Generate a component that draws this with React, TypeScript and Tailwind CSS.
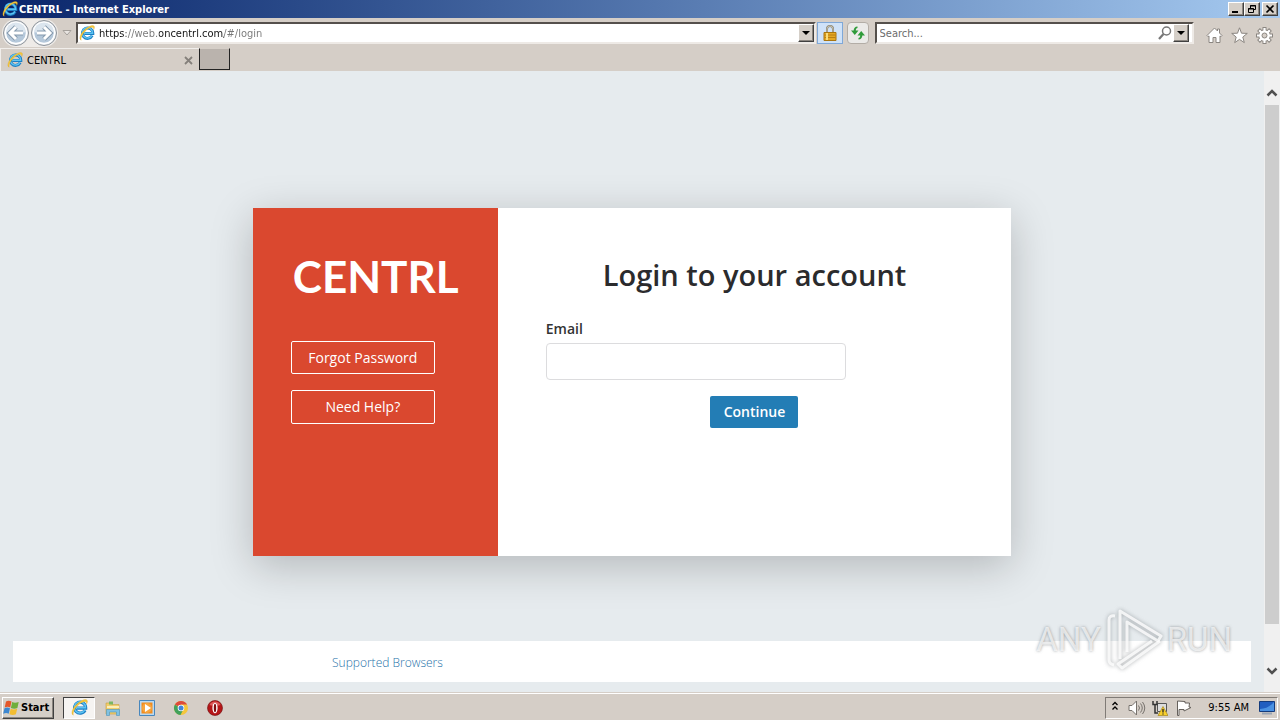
import { useState } from 'react';
import type { ReactNode } from 'react';

const RAISED =
  'border border-t-white border-l-white border-r-[#404040] border-b-[#404040] bg-[#d5cfc8] shadow-[inset_-1px_-1px_0_#8b8680]';

function IeIcon({ className }: { className: string }) {
  return (
    <svg viewBox="0 0 16 16" className={className} aria-hidden="true">
      <path
        d="M13.2 10.6a5.2 5.2 0 1 1 .6-2.6v.6H5.4"
        fill="none"
        stroke="#1c7fc4"
        strokeWidth="3"
      />
      <path
        d="M13 10.3a5.2 5.2 0 1 1 .6-2.3v.3H5.4"
        fill="none"
        stroke="#5cc3f2"
        strokeWidth="1.4"
      />
      <path
        d="M2.2 15.2C-.6 13.9 1.4 8.600 5.400 4.900 9.200 1.400 14 -.6 15.200 1.300c.5.8.2 2-.5 3.200.1-1.300-.3-2.100-1.300-2.200-2.100-.2-5.400 1.900-7.800 4.600-2.800 3-4.100 6.300-3.400 8.300z"
        fill="#f5c93b"
        stroke="#d99f1c"
        strokeWidth=".3"
      />
    </svg>
  );
}

function NavButton({ label, back }: { label: string; back?: boolean }) {
  return (
    <button type="button" aria-label={label} className="size-7">
      <svg viewBox="0 0 28 28" className="size-7">
        <circle cx="14" cy="14" r="12.500" fill="#e9edf1" stroke="#8d939a" />
        <circle cx="14" cy="14" r="10.500" fill="#b5c8da" stroke="#fff" strokeWidth="1.500" />
        <path d="M4 13a10 9.500 0 0 1 20 0q-10 3-20 0z" fill="#dbe5ee" />
        <path
          d={back ? 'M21 14H8m6-6-6 6 6 6' : 'M7 14h13m-6-6 6 6-6 6'}
          fill="none"
          stroke="#8499ad"
          strokeWidth="5"
        />
        <path
          d={back ? 'M21 14H8m6-6-6 6 6 6' : 'M7 14h13m-6-6 6 6-6 6'}
          fill="none"
          stroke="#fff"
          strokeWidth="3"
        />
      </svg>
    </button>
  );
}

function DropButton({ label }: { label: string }) {
  return (
    <button
      type="button"
      aria-label={label}
      className={`flex h-[18px] w-4 shrink-0 items-center justify-center ${RAISED}`}
    >
      <svg viewBox="0 0 8 4" className="h-1 w-2">
        <path d="M0 0h8L4 4z" fill="#000" />
      </svg>
    </button>
  );
}

function WindowButton({ label, children }: { label: string; children: ReactNode }) {
  return (
    <button type="button" aria-label={label} className={`flex h-3.5 w-4 items-center justify-center ${RAISED}`}>
      <svg viewBox="0 0 12 10" className="h-2.5 w-3" fill="none" stroke="#000">
        {children}
      </svg>
    </button>
  );
}

function TitleBar() {
  return (
    <header className="flex h-[18px] items-center bg-linear-to-r from-[#0a246a] to-[#a6caf0] pr-0.5 pl-0.5">
      <IeIcon className="size-4" />
      <h1 className="flex-1 pt-px pl-px text-[11px] leading-4 font-bold text-white">CENTRL - Internet Explorer</h1>
      <div className="flex">
        <WindowButton label="Minimize">
          <path d="M2 8h6" strokeWidth="2" />
        </WindowButton>
        <WindowButton label="Restore">
          <path d="M4.500 4V1.500h5v4H8M4 2h6" />
          <path d="M2.500 4.500h5v4h-5zM2 5h6" />
        </WindowButton>
        <span className="w-0.5" />
        <WindowButton label="Close">
          <path d="m2.500 1.500 7 7m0-7-7 7" strokeWidth="1.700" />
        </WindowButton>
      </div>
    </header>
  );
}

function Toolbar() {
  return (
    <div className="flex h-[30px] items-center pl-0.5">
      <div className="flex rounded-full bg-[#eeebe8]">
        <NavButton label="Back" back />
        <NavButton label="Forward" />
      </div>
      <button type="button" aria-label="Recent pages" className="flex w-[18px] justify-center">
        <svg viewBox="0 0 10 6" className="h-1.5 w-2.5">
          <path d="M1 .5h8l-4 4.500z" fill="#e9e5e1" stroke="#a5a09b" />
        </svg>
      </button>

      <div className="flex h-[22px] flex-1 items-center border-2 border-t-[#55504c] border-r-[#eeeae6] border-b-[#eeeae6] border-l-[#55504c] bg-white pl-px">
        <IeIcon className="size-4" />
        <input
          aria-label="Address"
          defaultValue="https://web.oncentrl.com/#/login"
          className="ml-1 min-w-0 flex-1 bg-[linear-gradient(90deg,#111_0_27px,#777_27px_60px,#111_60px_125px,#777_125px)] bg-clip-text pt-0.5 text-[11px] leading-4 text-transparent caret-black outline-none"
        />
        <DropButton label="Show address list" />
      </div>
      <button
        type="button"
        aria-label="Security report"
        className="ml-px flex h-[22px] w-[26px] items-center justify-center border border-[#7fa8d8] bg-[#cfe2f8]"
      >
        <svg viewBox="0 0 14 16" className="h-4 w-3.5">
          <path d="M4 8V4a3 3 0 0 1 6 0v4" fill="none" stroke="#8a8370" strokeWidth="2" />
          <path d="M4 8V4a3 3 0 0 1 6 0v4" fill="none" stroke="#d9d5c4" strokeWidth=".7" />
          <path d="M1 7.500h12v8H1z" fill="#e5a823" stroke="#a9750f" />
          <path d="M1.500 10h11M1.500 12.500h11" stroke="#b97f12" />
          <path d="M4 8v7" stroke="#f9dc79" strokeWidth="2" />
        </svg>
      </button>
      <button
        type="button"
        aria-label="Refresh"
        className="ml-1 flex h-[22px] w-[22px] items-center justify-center rounded-sm border border-[#b3ada6] bg-[#ebeae8]"
      >
        <svg viewBox="0 0 16 16" className="size-4" fill="#2f9b3a">
          <path d="M7.500 1.500C5 1.500 3.700 3.200 3.700 5.500H1L4.800 10l3.700-4.500H5.800c0-1.400.5-2.200 1.700-2.400z" />
          <path d="M8.500 14.500c2.500 0 3.800-1.700 3.800-4H15L11.200 6l-3.700 4.500h2.700c0 1.400-.5 2.200-1.700 2.400z" />
        </svg>
      </button>

      <div className="ml-1.5 flex h-[22px] w-1/4 items-center border-2 border-t-[#55504c] border-r-[#eeeae6] border-b-[#eeeae6] border-l-[#55504c] bg-white pr-[3px] pl-[3px]">
        <input
          aria-label="Search"
          placeholder="Search..."
          className="min-w-0 flex-1 pt-0.5 text-[11px] leading-4 outline-none placeholder:text-[#6c6c6c]"
        />
        <button type="button" aria-label="Go" className="mr-px">
          <svg viewBox="0 0 14 14" className="size-3.5" fill="none" stroke="#777">
            <circle cx="8.500" cy="5" r="4" strokeWidth="1.500" />
            <path d="m5.500 8-4.500 5" strokeWidth="2.200" />
          </svg>
        </button>
        <DropButton label="Search providers" />
      </div>

      <div className="mr-[7px] ml-3 flex gap-2 pt-1">
        <button type="button" aria-label="Home">
          <svg viewBox="0 0 17 17" className="size-[17px]" fill="#fff" stroke="#8b8681">
            <path d="M8.500 1 1 8.500l1 1.200 1-.8V15.500h4V10.500h3v5h4V8.900l1 .8 1-1.200-2.500-2.500V2h-2v2z" />
          </svg>
        </button>
        <button type="button" aria-label="Favorites">
          <svg viewBox="0 0 17 17" className="size-[17px]" fill="#fff" stroke="#8b8681">
            <path d="m8.500.8 2 5.400 5.800.2-4.500 3.600 1.500 5.600-4.800-3.200-4.800 3.200 1.500-5.600L.7 6.400l5.800-.2z" />
          </svg>
        </button>
        <button type="button" aria-label="Tools">
          <svg viewBox="0 0 17 17" className="size-[17px]">
            <g stroke="#8b8681" strokeWidth="4">
              <path d="M8.500 0v17M0 8.500h17M2.500 2.500l12 12m0-12-12 12" />
            </g>
            <circle cx="8.500" cy="8.500" r="6.200" fill="#8b8681" />
            <g stroke="#fff" strokeWidth="2.200">
              <path d="M8.500 1v15M1 8.500h15M3.200 3.200l10.600 10.600m0-10.600L3.200 13.800" />
            </g>
            <circle cx="8.500" cy="8.500" r="5.300" fill="#fff" />
            <circle cx="8.500" cy="8.500" r="2.500" fill="#d5cec7" stroke="#8b8681" />
          </svg>
        </button>
      </div>
    </div>
  );
}

function TabStrip() {
  return (
    <div className="flex h-[23px] items-stretch">
      <div className="flex w-[199px] items-center border-t border-l border-[#f1eeeb] pr-1.5 pl-1.5">
        <IeIcon className="size-4" />
        <span className="flex-1 pt-0.5 pl-1 text-[11px] leading-4 text-black">CENTRL</span>
        <button type="button" aria-label="Close tab">
          <svg viewBox="0 0 9 9" className="size-[9px]" stroke="#85807b" strokeWidth="1.800">
            <path d="m1 1 7 7m0-7-7 7" />
          </svg>
        </button>
      </div>
      <button
        type="button"
        aria-label="New tab"
        className="mb-px w-[31px] border border-t-[#d5cec7] border-r-[#222] border-b-[#222] border-l-[#222] bg-[#bab3ad]"
      />
    </div>
  );
}

function LoginCard() {
  const [email, setEmail] = useState('');

  return (
    <div className="flex min-h-[348px] w-3/5 bg-white shadow-[0_10px_40px_rgba(0,0,0,0.22)]">
      <aside className="flex w-[245px] flex-col gap-4 bg-[#da482f] px-[38px]">
        <p className="mt-[42px] mb-[23px] pl-0.5 font-[Lato] text-[44px] leading-[52px] font-bold text-white">CENTRL</p>
        <button
          type="button"
          className="h-[33px] w-36 rounded-xs border border-white text-sm leading-5 text-white"
        >
          Forgot Password
        </button>
        <button
          type="button"
          className="h-[34px] w-36 rounded-xs border border-white text-sm leading-5 text-white"
        >
          Need Help?
        </button>
      </aside>

      <form
        className="flex flex-1 flex-col px-12 pt-11"
        onSubmit={(e) => {
          e.preventDefault();
        }}
      >
        <h2 className="text-center text-[29px] leading-[46px] font-semibold text-[#2b2b2d]">Login to your account</h2>
        <label htmlFor="email" className="mt-5 text-sm leading-[22px] font-semibold text-[#333]">
          Email
        </label>
        <input
          id="email"
          type="email"
          value={email}
          onChange={(e) => setEmail(e.target.value)}
          className="mt-[3px] h-[37px] w-[300px] rounded border border-[#dcdcde] px-3 text-sm outline-none"
        />
        <button
          type="submit"
          className="mt-4 h-8 w-[88px] self-center rounded-xs bg-[#237db5] text-sm leading-5 font-semibold text-white"
        >
          Continue
        </button>
      </form>
    </div>
  );
}

function Scrollbar() {
  return (
    <div className="flex w-4 flex-col items-center bg-[#f0f0f0] pt-4">
      <svg viewBox="0 0 12 12" className="size-3" fill="none" stroke="#505050" strokeWidth="2.500">
        <path d="m1.500 8.500 4.500-4.500 4.500 4.500" />
      </svg>
      <div className="mt-1.5 mb-[41px] w-3.5 flex-1 bg-[#cdcdcd]" />
      <svg viewBox="0 0 12 12" className="mb-[15px] size-3" fill="none" stroke="#505050" strokeWidth="2.500">
        <path d="M1.500 3.500 6 8l4.500-4.500" />
      </svg>
    </div>
  );
}

function Watermark() {
  return (
    <div className="pointer-events-none absolute right-12 bottom-5 flex items-center gap-1 font-[Roboto,sans-serif] text-[33px] leading-[64px] text-white/70 [text-shadow:0_0_3px_rgba(110,115,120,0.7)]">
      <span>ANY</span>
      <svg viewBox="0 0 58 64" className="h-16 w-[58px] drop-shadow-[0_0_2px_rgba(110,115,120,0.7)]" fill="none" strokeLinejoin="round">
        <path d="M10 8q-6-1-6 4v40q0 4 5 5" stroke="#fff" strokeOpacity=".8" strokeWidth="3" />
        <path d="M15 51V3l41 25-3 5L22 14v30" stroke="#fff" strokeOpacity=".8" strokeWidth="3" />
        <path d="M55 33 17 60l-4-4 34-23" stroke="#fff" strokeOpacity=".8" strokeWidth="3" />
      </svg>
      <span>RUN</span>
    </div>
  );
}

function Taskbar() {
  return (
    <footer className="flex h-7 items-center border-t border-[#d5cec7] bg-[#d5cec7] pr-0.5 pl-0.5 shadow-[inset_0_1px_0_#fff]">
      <button
        type="button"
        className={`mt-0.5 flex h-[22px] w-[52px] items-center gap-0.5 text-[11px] leading-4 font-bold text-black ${RAISED}`}
      >
        <svg viewBox="0 0 16 16" className="size-4">
          <path d="M3 1.500q2.500-1.500 5.500 0L7.200 7.500q-2.500-1.500-5.500 0z" fill="#e4572b" />
          <path d="M9.200 2q2.500 1.500 6.500 0l-1.300 6q-3 1.500-6.500 0z" fill="#6fae3c" />
          <path d="M1.500 8.300q2.500-1.500 5.500 0l-1.300 5.500q-2.500-1.500-5.500 0z" fill="#3d87d0" />
          <path d="M7.700 8.800q2.500 1.500 6.500 0l-1.300 5.500q-3 1.500-6.500 0z" fill="#f3bd31" />
        </svg>
        Start
      </button>
      <div className="mt-0.5 ml-[9px] flex items-center">
        <button
          type="button"
          aria-label="Internet Explorer"
          className="flex h-[22px] w-8 items-center justify-center border border-t-[#404040] border-r-white border-b-white border-l-[#404040] bg-[#f6f4f2]"
        >
          <IeIcon className="size-[17px]" />
        </button>
        <button type="button" aria-label="Explorer" className="ml-px px-[9px]">
          <svg viewBox="0 0 16 16" className="size-4">
            <path d="M1 3h5l1 1.500h7V14H1z" fill="#efcd6c" stroke="#c9a041" strokeWidth=".6" />
            <path d="M4 1.500h4v3H4z" fill="#79b763" />
            <path d="M2 6h12v2H2z" fill="#fbeeb9" />
            <path d="M1.500 15.500V9.500h13v6h-3V12h-7v3.500z" fill="#7fc1e3" stroke="#4c93bd" strokeWidth=".6" />
          </svg>
        </button>
        <button type="button" aria-label="Media Player" className="px-[9px]">
          <svg viewBox="0 0 16 16" className="size-4">
            <path d="M.5.500h15v15H.5z" fill="#b9d9f2" stroke="#4887bd" />
            <path d="M2.500 2.500h11v11h-11z" fill="#f28c1e" />
            <circle cx="8" cy="8" r="5" fill="#f7a53e" />
            <path d="M6 4v8l6-4z" fill="#fff" />
          </svg>
        </button>
        <button type="button" aria-label="Chrome" className="px-[9px]">
          <svg viewBox="0 0 16 16" className="size-4">
            <circle cx="8" cy="8" r="7" fill="#f4c63b" />
            <path d="M8 8 1.900 4.500A7 7 0 0 1 14.100 4.500H8z" fill="#dd4a3c" />
            <path d="M1.900 4.500A7 7 0 0 0 7.500 15L10 10z" fill="#42a15b" />
            <circle cx="8" cy="8" r="3.300" fill="#fff" />
            <circle cx="8" cy="8" r="2.500" fill="#4285d8" />
          </svg>
        </button>
        <button type="button" aria-label="Opera" className="px-[9px]">
          <svg viewBox="0 0 16 16" className="size-4">
            <circle cx="8" cy="8" r="7.500" fill="#b51618" stroke="#6d0b0d" strokeWidth=".6" />
            <path d="M2.500 5a6 6 0 0 1 11 0q-5.500 2-11 0z" fill="#dd5a5a" />
            <ellipse cx="8" cy="8" rx="2.600" ry="5.300" fill="#fff" />
            <ellipse cx="8" cy="8" rx="1.200" ry="4.200" fill="#7d0d10" />
          </svg>
        </button>
      </div>

      <div className="mt-0.5 ml-auto flex h-[22px] items-center border border-t-[#807b76] border-r-white border-b-white border-l-[#807b76] pr-0.5 pl-1.5">
        <button type="button" aria-label="Show hidden icons" className="pb-1">
          <svg viewBox="0 0 6 10" className="h-2.5 w-1.5" fill="none" stroke="#000" strokeWidth="1.300">
            <path d="M.5 4 3 1.500 5.500 4m-5 4.500L3 6l2.500 2.500" />
          </svg>
        </button>
        <svg viewBox="0 0 18 16" className="ml-2.5 h-4 w-[18px]" fill="none" stroke="#77726d">
          <path d="M1 5.500h3L8.500 1v14L4 10.500H1z" fill="#fff" />
          <path d="M10.500 5.500q2 2.500 0 5M12.500 3.500q3.500 4.500 0 9M14.500 2q4.500 6 0 12" />
        </svg>
        <svg viewBox="0 0 16 16" className="ml-1.5 size-4">
          <path d="M5.500 3.500h9v8h-9z" fill="#ddd" stroke="#555" />
          <path d="M1 1v3.500h4V1M3 4.500V13h3" fill="none" stroke="#333" strokeWidth="1.500" />
          <path d="m11 6.500 5 9H6z" fill="#f9cf2a" stroke="#9b7a0b" strokeWidth=".6" />
          <path d="M11 9v3.500m0 1v1" stroke="#222" strokeWidth="1.300" />
        </svg>
        <svg viewBox="0 0 16 16" className="ml-2 size-4" fill="#fff" stroke="#66615c">
          <path d="M1.500 1v14.500h1.500V9.500h5V11l7-3.500-2-.5.500-4H9V1.500z" />
        </svg>
        <time className="ml-4 text-[11px] leading-4 text-black">9:55 AM</time>
        <svg viewBox="0 0 16 14" className="ml-2.5 h-3.5 w-4">
          <path d="M.5.500h15v10H.5z" fill="#215ec0" stroke="#143b7c" />
          <path d="M1 8q8 0 14-7v9H1z" fill="#4b92e2" />
          <path d="M3 12.500h10" stroke="#9aa5b3" strokeWidth="2" />
        </svg>
      </div>
    </footer>
  );
}

export default function App() {
  return (
    <div className="flex min-h-screen flex-col bg-[#d5cec7] font-['DejaVu_Sans_Condensed','DejaVu_Sans',sans-serif]">
      <TitleBar />
      <Toolbar />
      <TabStrip />
      <div className="relative flex flex-1 bg-[#e6ebee] font-['Open_Sans',sans-serif]">
        <main className="flex flex-1 flex-col">
          <div className="flex flex-1 items-center justify-center pt-[52px]">
            <LoginCard />
          </div>
          <div className="mx-[13px] mb-2.5 flex h-[41px] items-center bg-white pt-0.5">
            <a href="#browsers" className="ml-[319px] text-xs leading-4 font-light text-[#1f73aa]">
              Supported Browsers
            </a>
          </div>
        </main>
        <Scrollbar />
        <Watermark />
      </div>
      <Taskbar />
    </div>
  );
}
